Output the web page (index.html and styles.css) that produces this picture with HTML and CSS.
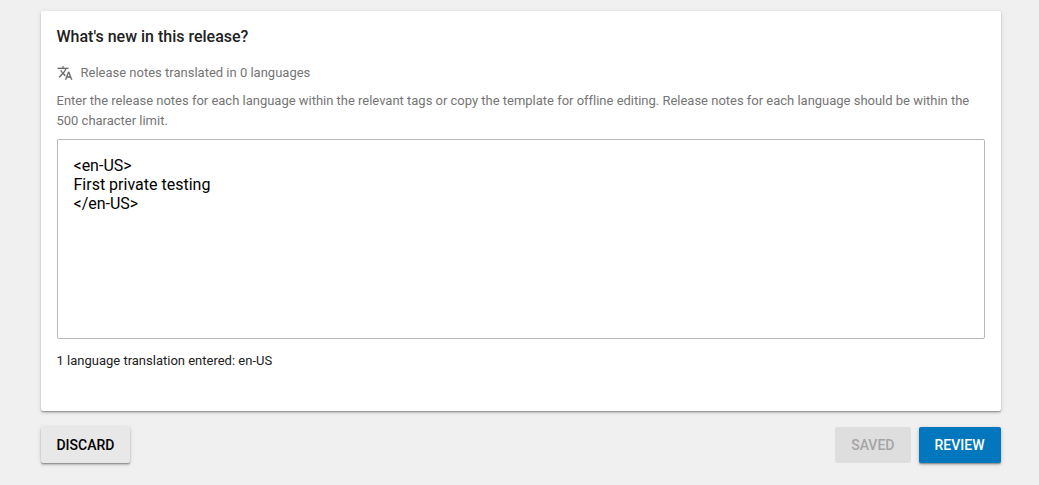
FILE: index.html
```html
<!DOCTYPE html>
<html lang="en">
<head>
<meta charset="utf-8">
<title>Release notes</title>
<link rel="stylesheet" href="styles.css">
</head>
<body>
<main class="page">
<section class="card">
<h2 class="title">What's new in this release?</h2>
<div class="status">
<svg class="icon" viewBox="0 0 24 24"><path d="M12.87 15.07l-2.54-2.51.03-.03c1.74-1.94 2.98-4.17 3.71-6.53H17V4h-7V2H8v2H1v1.99h11.17C11.5 7.92 10.44 9.75 9 11.35 8.07 10.32 7.3 9.19 6.69 8h-2c.73 1.63 1.73 3.17 2.98 4.56l-5.09 5.02L4 19l5-5 3.11 3.11.76-2.04zM18.5 10h-2L12 22h2l1.12-3h4.75L21 22h2l-4.5-12zm-2.62 7l1.62-4.33L19.12 17h-3.24z"/></svg>
<span>Release notes translated in 0 languages</span>
</div>
<p class="hint">Enter the release notes for each language within the relevant tags or copy the template for offline editing. Release notes for each language should be within the 500 character limit.</p>
<div class="editor">&lt;en-US&gt;
First private testing
&lt;/en-US&gt;</div>
<p class="summary">1 language translation entered: en-US</p>
</section>
<div class="actions">
<button class="btn discard">DISCARD</button>
<button class="btn saved" disabled>SAVED</button>
<button class="btn review">REVIEW</button>
</div>
</main>
</body>
</html>
```
FILE: styles.css
```css
* { box-sizing: border-box; }
html { background: #f0f0f0; }
body { margin: 0; min-height: 485px; background: #f0f0f0; font-family: Roboto, sans-serif; color: #212121; }
.page { width: 960px; margin-left: 40.5px; padding: 11px 0 22px; }
.card { height: 400px; padding: 16px; background: #fff; border-radius: 2px; box-shadow: 0 2px 2px rgba(0,0,0,.14), 0 1px 5px rgba(0,0,0,.12), 0 1px 1px rgba(0,0,0,.2); }
.title { margin: 0; font-size: 16px; line-height: 20px; font-weight: 500; }
.status { display: flex; align-items: center; gap: 8px; height: 20px; margin-top: 15px; font-size: 13px; color: #757575; }
.icon { width: 16px; height: 16px; margin-top: 1px; fill: #6c6c6c; stroke: #6c6c6c; stroke-width: .2; }
.hint { margin: 9px 0 8px; font-size: 13px; line-height: 20px; color: #757575; letter-spacing: -.012px; }
.editor { height: 200px; padding: 16px; border: 1px solid #b8b8b8; border-radius: 2px; white-space: pre-wrap; font-size: 16px; line-height: 19px; color: #000; }
.summary { margin: 12px 0 0; font-size: 13px; line-height: 20px; }
.actions { display: flex; gap: 8px; margin-top: 16px; }
.btn { height: 36px; padding: 0 16px; border: 0; border-radius: 2px; font: 500 14px Roboto, sans-serif; }
.discard { width: 89.9px; margin-right: auto; padding: 0 15px; background: #e8e8e8; color: #000; }
.discard, .review { box-shadow: 0 2px 2px rgba(0,0,0,.14), 0 1px 5px rgba(0,0,0,.14), 0 1px 1px rgba(0,0,0,.24); }
.saved { width: 75.4px; background: #dedede; color: #a5a5a5; }
.review { width: 82px; background: #0277bd; color: #fff; }
```
